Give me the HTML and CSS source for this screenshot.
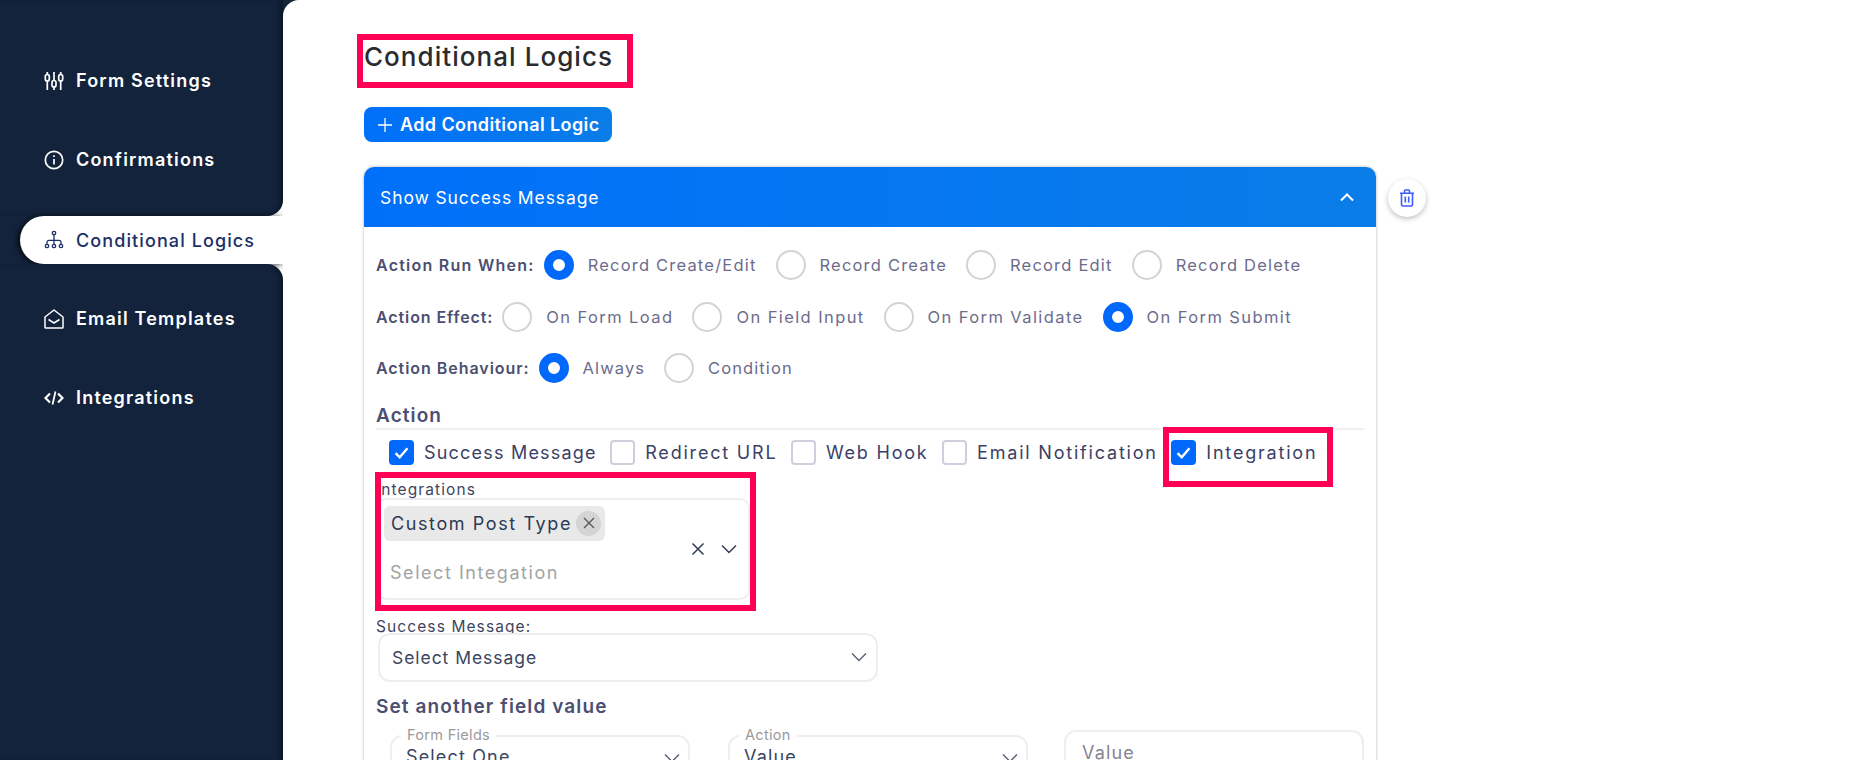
FILE: index.html
```html
<!DOCTYPE html>
<html lang="en">
<head>
    <meta charset="UTF-8">
    <meta name="viewport" content="width=device-width, initial-scale=1.0">
    <title>Conditional Logics</title>
    <link rel="stylesheet" href="styles.css">
</head>
<body>
    <div class="app">
        <aside class="sidebar">
            <div class="side-block side-top">
                <a class="side-item">
                    <svg class="side-icon" viewBox="0 0 20 20" fill="none" stroke="currentColor" stroke-width="1.700">
                        <path d="M3.300 1v2.500M3.300 10v9M10 1v9M10 16v3M16.700 1v2.500M16.700 10v9"/>
                        <rect x="1.300" y="3.500" width="4" height="6.500" rx="2"/>
                        <rect x="8" y="9.500" width="4" height="6.500" rx="2"/>
                        <rect x="14.700" y="3.500" width="4" height="6.500" rx="2"/>
                    </svg>
                    Form Settings
                </a>
                <a class="side-item">
                    <svg class="side-icon" viewBox="0 0 20 20" fill="none" stroke="currentColor" stroke-width="1.700">
                        <circle cx="10" cy="10" r="8.700"/>
                        <path d="M10 9v5.500M10 5.300v1.800"/>
                    </svg>
                    Confirmations
                </a>
            </div>
            <div class="side-active-row">
                <a class="side-active">
                    <svg class="side-icon" viewBox="0 0 20 20" fill="none" stroke="currentColor" stroke-width="1.300">
                        <circle cx="10" cy="3" r="1.700"/>
                        <circle cx="3" cy="16" r="1.700"/>
                        <circle cx="10" cy="16" r="1.700"/>
                        <circle cx="17" cy="16" r="1.700"/>
                        <path d="M10 4.700v9.600M3 14.300v-2a2 2 0 0 1 2-2h10a2 2 0 0 1 2 2v2"/>
                    </svg>
                    Conditional Logics
                </a>
            </div>
            <div class="side-block side-bottom">
                <a class="side-item">
                    <svg class="side-icon" viewBox="0 0 20 20" fill="none" stroke="currentColor" stroke-width="1.500" stroke-linejoin="round">
                        <path d="M1 8l9-7 9 7v10.200a.8.800 0 0 1-.8.800H1.800a.8.800 0 0 1-.8-.8z"/>
                        <path d="M4.500 10.500L10 14l5.500-3.500"/>
                    </svg>
                    Email Templates
                </a>
                <a class="side-item">
                    <svg class="side-icon" viewBox="0 0 20 20" fill="none" stroke="currentColor" stroke-width="2.200">
                        <path d="M6 5.500L1.500 10 6 14.500M14 5.500l4.500 4.500-4.500 4.500"/>
                        <path d="M11.500 3.500l-3 13" stroke-width="1.800"/>
                    </svg>
                    Integrations
                </a>
            </div>
        </aside>

        <main class="main">
            <h1 class="page-title">Conditional Logics<span class="mark mark-title"></span></h1>

            <button class="add-btn">
                <svg class="add-icon" viewBox="0 0 14 14" fill="none" stroke="currentColor" stroke-width="1.300"><path d="M7 0v14M0 7h14"/></svg>
                Add Conditional Logic
            </button>

            <div class="logic-wrap">
                <div class="panel">
                    <div class="panel-head">
                        <span>Show Success Message</span>
                        <svg class="panel-caret" viewBox="0 0 14 9" fill="none" stroke="currentColor" stroke-width="2"><path d="M1 7.500l6-6 6 6"/></svg>
                    </div>
                    <div class="panel-body">
                        <div class="radio-row run-row">
                            <span class="row-label">Action Run When:</span>
                            <span class="radio on"></span><span class="radio-text">Record Create/Edit</span>
                            <span class="radio"></span><span class="radio-text">Record Create</span>
                            <span class="radio"></span><span class="radio-text">Record Edit</span>
                            <span class="radio"></span><span class="radio-text">Record Delete</span>
                        </div>
                        <div class="radio-row effect-row">
                            <span class="row-label">Action Effect:</span>
                            <span class="radio"></span><span class="radio-text">On Form Load</span>
                            <span class="radio"></span><span class="radio-text">On Field Input</span>
                            <span class="radio"></span><span class="radio-text">On Form Validate</span>
                            <span class="radio on"></span><span class="radio-text">On Form Submit</span>
                        </div>
                        <div class="radio-row behaviour-row">
                            <span class="row-label">Action Behaviour:</span>
                            <span class="radio on"></span><span class="radio-text">Always</span>
                            <span class="radio"></span><span class="radio-text">Condition</span>
                        </div>

                        <h3 class="section-title action-title">Action</h3>
                        <div class="check-row">
                            <span class="check-item first"><span class="check on"><svg viewBox="0 0 16 16" fill="none" stroke="#fff" stroke-width="2"><path d="M3 8.500l3.500 3.500L13 4.500"/></svg></span>Success Message</span>
                            <span class="check-item"><span class="check"></span>Redirect URL</span>
                            <span class="check-item"><span class="check"></span>Web Hook</span>
                            <span class="check-item"><span class="check"></span>Email Notification</span>
                            <span class="check-item marked"><span class="check on"><svg viewBox="0 0 16 16" fill="none" stroke="#fff" stroke-width="2"><path d="M3 8.500l3.500 3.500L13 4.500"/></svg></span>Integration<span class="mark mark-check"></span></span>
                        </div>

                        <div class="integrations marked">
                            <div class="small-label">Integrations</div>
                            <div class="multi-select">
                                <div class="multi-values">
                                    <span class="chip">Custom Post Type
                                        <span class="chip-x"><svg viewBox="0 0 12 12" fill="none" stroke="#555" stroke-width="1.300"><path d="M1 1l10 10M11 1L1 11"/></svg></span>
                                    </span>
                                    <span class="placeholder">Select Integation</span>
                                </div>
                                <svg class="clear-x" viewBox="0 0 14 14" fill="none" stroke="#2d3a55" stroke-width="1.500"><path d="M1.500 1.500l11 11M12.500 1.500l-11 11"/></svg>
                                <svg class="chevron dark" viewBox="0 0 16 10" fill="none" stroke="currentColor" stroke-width="1.500"><path d="M1 1.500l7 7 7-7"/></svg>
                            </div>
                            <span class="mark mark-integrations"></span>
                        </div>

                        <div class="small-label message-label">Success Message:</div>
                        <div class="select message-select">
                            <span>Select Message</span>
                            <svg class="chevron" viewBox="0 0 16 10" fill="none" stroke="currentColor" stroke-width="1.500"><path d="M1 1.500l7 7 7-7"/></svg>
                        </div>

                        <h3 class="section-title another-title">Set another field value</h3>
                        <div class="field-row">
                            <div class="outlined">
                                <span class="legend">Form Fields</span>
                                <span>Select One</span>
                                <svg class="chevron" viewBox="0 0 16 10" fill="none" stroke="currentColor" stroke-width="1.500"><path d="M1 1.500l7 7 7-7"/></svg>
                            </div>
                            <div class="outlined">
                                <span class="legend">Action</span>
                                <span>Value</span>
                                <svg class="chevron" viewBox="0 0 16 10" fill="none" stroke="currentColor" stroke-width="1.500"><path d="M1 1.500l7 7 7-7"/></svg>
                            </div>
                            <div class="value-input">Value</div>
                        </div>
                    </div>
                </div>
                <button class="trash-btn">
                    <svg viewBox="0 0 16 18" fill="none" stroke="currentColor" stroke-width="1.600" stroke-linejoin="round">
                        <path d="M1 4.200h14M5.500 4V2a1 1 0 0 1 1-1h3a1 1 0 0 1 1 1v2M2.500 4.200v11.300a1.500 1.500 0 0 0 1.500 1.500h8a1.500 1.500 0 0 0 1.500-1.500V4.200M6.300 7.500v6M9.700 7.500v6"/>
                    </svg>
                </button>
            </div>
        </main>
    </div>
</body>
</html>
```

FILE: styles.css
```css
html, body {
    margin: 0;
    height: 760px;
    overflow: hidden;
}
body {
    background-color: #13233c;
    font-family: Inter, "Open Sans", sans-serif;
}
.app {
    display: flex;
    height: 760px;
    overflow: hidden;
}

/* sidebar */
.sidebar {
    width: 283px;
    flex-shrink: 0;
    display: flex;
    flex-direction: column;
    background-color: #fff;
}
.side-block {
    background-color: #13233c;
    box-shadow: inset -6px 0 6px -4px rgba(0, 0, 0, 0.5);
}
.side-top {
    height: 216px;
    padding-top: 41px;
    box-sizing: border-box;
    border-bottom-right-radius: 16px;
}
.side-bottom {
    flex: 1;
    padding-top: 15px;
    border-top-right-radius: 16px;
}
.side-item, .side-active {
    display: flex;
    align-items: center;
    gap: 12px;
    height: 79px;
    padding-left: 44px;
    color: #fff;
    font-size: 18px;
    font-weight: 600;
    letter-spacing: 1.2px;
    white-space: nowrap;
}
.side-active-row {
    background-color: #13233c;
    padding-left: 20px;
}
.side-active {
    height: 48px;
    padding-left: 24px;
    background-color: #fff;
    color: #1c2f66;
    font-weight: 500;
    letter-spacing: 1.1px;
    border-radius: 24px 0 0 24px;
    box-shadow: -2px 1px 6px rgba(0, 0, 0, 0.8);
}
.side-icon {
    width: 20px;
    height: 20px;
    flex-shrink: 0;
}

/* main */
.main {
    flex: 1;
    background-color: #fff;
    border-top-left-radius: 16px;
    padding-left: 81px;
    color: #4b4f72;
}
.marked {
    position: relative;
}
.mark {
    position: absolute;
    border: 6px solid #ff0055;
    z-index: 2;
}
.page-title {
    position: relative;
    display: inline-block;
    margin: 40px 0 0;
    font-size: 26px;
    line-height: 34px;
    font-weight: 500;
    letter-spacing: 1.05px;
    color: #2b2b2f;
    vertical-align: top;
}
.mark-title {
    left: -7px;
    top: -6px;
    width: 264px;
    height: 42px;
}
.add-btn {
    display: flex;
    align-items: center;
    gap: 8px;
    width: 248px;
    height: 35px;
    margin-top: 33px;
    padding: 0 0 0 14px;
    border: none;
    border-radius: 8px;
    background: linear-gradient(90deg, #0070fa, #0a7de8);
    color: #fff;
    font-family: inherit;
    font-size: 18px;
    font-weight: 600;
    letter-spacing: 0.4px;
    white-space: nowrap;
}
.add-icon {
    width: 14px;
    height: 14px;
}
.logic-wrap {
    display: flex;
    align-items: flex-start;
    gap: 12px;
    margin-top: 25px;
}
.panel {
    width: 1012px;
    box-sizing: border-box;
    height: 700px;
    border-radius: 10px 10px 0 0;
    box-shadow: 0 0 3px rgba(0, 0, 0, 0.35);
    background-color: #fff;
}
.panel-head {
    display: flex;
    align-items: center;
    justify-content: space-between;
    height: 60px;
    padding: 0 22px 0 16px;
    border-radius: 10px 10px 0 0;
    background: linear-gradient(90deg, #0070fa, #0a7de8);
    color: #fff;
    font-size: 17.500px;
    letter-spacing: 0.9px;
}
.panel-caret {
    width: 14px;
    height: 9px;
}
.trash-btn {
    width: 38px;
    height: 38px;
    margin-top: 12px;
    display: flex;
    align-items: center;
    justify-content: center;
    padding: 0;
    border: none;
    border-radius: 50%;
    background-color: #fff;
    box-shadow: 0 2px 5px rgba(0, 0, 0, 0.25);
    color: #3b5bff;
}
.trash-btn svg {
    width: 16px;
    height: 18px;
}
.panel-body {
    padding: 23px 12px 0;
}

/* radios */
.radio-row {
    display: flex;
    align-items: center;
    height: 30px;
    margin-bottom: 21.500px;
    white-space: nowrap;
}
.row-label {
    font-size: 16px;
    font-weight: 600;
    letter-spacing: 1.25px;
    margin-right: 9px;
}
.effect-row .row-label {
    letter-spacing: 0.9px;
}
.behaviour-row .row-label {
    letter-spacing: 0.95px;
}
.radio {
    width: 30px;
    height: 30px;
    box-sizing: border-box;
    border: 2px solid #d3d3d3;
    border-radius: 50%;
    margin-right: 14px;
    flex-shrink: 0;
}
.radio.on {
    border: 9.500px solid #0069fb;
}
.radio-text {
    margin-right: 19px;
    font-size: 16.500px;
    letter-spacing: 1.1px;
    color: #6c6c8c;
}
.run-row .radio-text {
    letter-spacing: 1.2px;
}
.effect-row .radio-text {
    letter-spacing: 1.4px;
}

/* action */
.section-title {
    margin: 0;
    font-size: 19px;
    font-weight: 600;
    letter-spacing: 1.1px;
    line-height: 22px;
}
.action-title {
    margin-top: 20px;
    padding-bottom: 1px;
    border-bottom: 2px solid #efefef;
}
.check-row {
    display: flex;
    margin-top: 10px;
    padding-left: 13px;
    gap: 13.500px;
    white-space: nowrap;
}
.check-item {
    display: flex;
    align-items: center;
    gap: 10px;
    height: 25px;
    font-size: 18px;
    letter-spacing: 1.8px;
    color: #3b4166;
}
.check-item.first {
    letter-spacing: 1.2px;
}
.check {
    width: 25px;
    height: 25px;
    box-sizing: border-box;
    border: 2px solid #cdd0dc;
    border-radius: 4px;
}
.check.on {
    border: none;
    background-color: #0069fb;
    padding: 3px;
}
.check svg {
    display: block;
}
.mark-check {
    left: -8px;
    top: -13px;
    width: 158px;
    height: 48px;
}

/* integrations */
.integrations {
    margin-top: 16px;
}
.small-label {
    font-size: 15.500px;
    line-height: 17px;
    letter-spacing: 1.1px;
    color: #3f4560;
}
.multi-select {
    display: flex;
    align-items: center;
    width: 374px;
    height: 102px;
    box-sizing: border-box;
    border: 2px solid #eee;
    border-radius: 10px;
    color: #2d3a55;
}
.multi-values {
    flex: 1;
    align-self: flex-start;
    display: flex;
    flex-direction: column;
    align-items: flex-start;
    gap: 21px;
    padding: 6px 0 0 6px;
}
.chip {
    display: flex;
    align-items: center;
    gap: 4px;
    height: 35px;
    padding: 0 4px 0 7px;
    border-radius: 6px;
    background-color: #e9e9e9;
    font-size: 18px;
    letter-spacing: 1.6px;
    white-space: nowrap;
}
.chip-x {
    display: flex;
    align-items: center;
    justify-content: center;
    width: 25px;
    height: 25px;
    border-radius: 50%;
    background-color: #d4d4d4;
}
.chip-x svg {
    width: 12px;
    height: 12px;
}
.placeholder {
    margin-left: 6px;
    font-size: 18px;
    line-height: 22px;
    letter-spacing: 1.55px;
    color: #a3a3a3;
    white-space: nowrap;
}
.clear-x {
    width: 14px;
    height: 14px;
    margin-right: 16px;
}
.chevron {
    width: 16px;
    height: 10px;
    color: #5c6478;
    flex-shrink: 0;
}
.chevron.dark {
    color: #2d3a55;
    margin-right: 11px;
}
.mark-integrations {
    left: -1px;
    top: -9px;
    width: 369px;
    height: 127px;
}

/* success message */
.message-label {
    margin-top: 18px;
    margin-bottom: -2px;
}
.select {
    position: relative;
    display: flex;
    align-items: center;
    justify-content: space-between;
    width: 500px;
    height: 49px;
    margin-left: 2px;
    padding: 0 9px 0 12px;
    box-sizing: border-box;
    border: 2px solid #eee;
    border-radius: 12px;
    background-color: #fff;
    font-size: 17.500px;
    letter-spacing: 0.95px;
    color: #3a4560;
}
.another-title {
    margin-top: 14px;
}
.field-row {
    display: flex;
    align-items: flex-start;
    gap: 38px;
    margin-top: 12px;
    padding-left: 14px;
}
.outlined, .value-input {
    position: relative;
    width: 300px;
    height: 60px;
    box-sizing: border-box;
    padding: 9px 10px 0 14px;
    border: 2px solid #eee;
    border-radius: 12px;
    font-size: 18px;
    letter-spacing: 1.15px;
    color: #3a4560;
}
.outlined {
    margin-top: 5px;
}
.outlined .chevron {
    position: absolute;
    right: 8px;
    top: 16px;
}
.legend {
    position: absolute;
    left: 9px;
    top: -11px;
    padding: 0 6px;
    background-color: #fff;
    font-size: 14.500px;
    line-height: 18px;
    letter-spacing: 0.3px;
    color: #9a9a9a;
}
.value-input {
    margin-left: -2px;
    padding: 10px 0 0 16px;
    color: #85858f;
}
```
